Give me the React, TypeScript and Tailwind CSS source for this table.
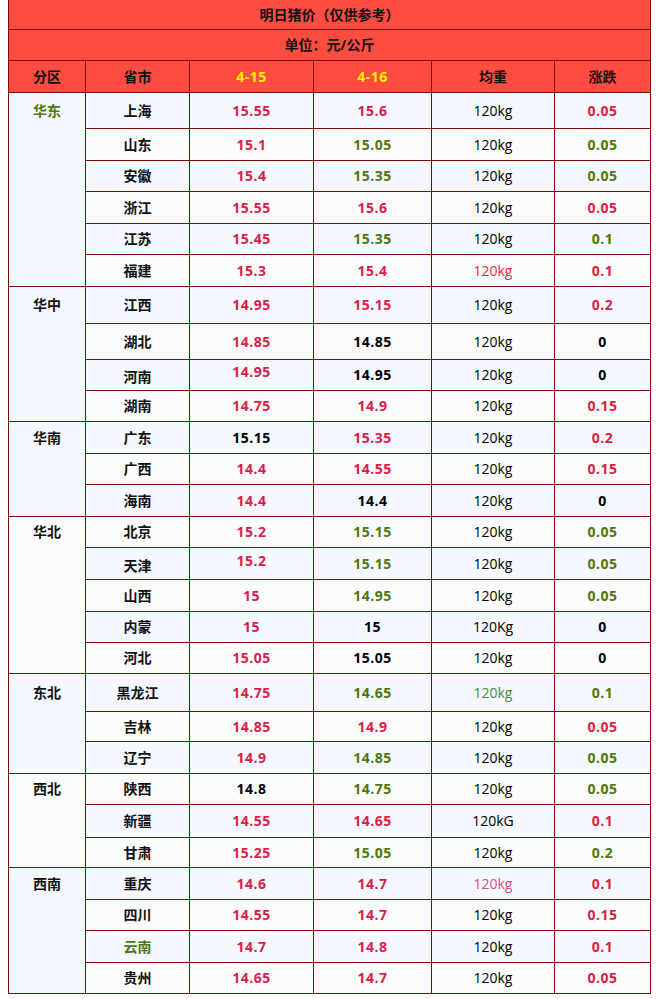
import React from "react";

type C = "r" | "g" | "k" | "rw" | "pw" | "gw";

const colorCls: Record<C, string> = {
  r: "text-[#dc1e46]",
  g: "text-[#4c780c]",
  k: "text-[#000000]",
  rw: "text-[#f4283c]",
  pw: "text-[#dc4f7e]",
  gw: "text-[#4a8a3a]",
};

type Row = {
  name: string;
  nameColor?: string;
  nameOff?: string;
  h: string;
  bg: "b" | "w";
  a: string;
  ac: C;
  aOff?: string;
  b: string;
  bc: C;
  w: string;
  wc: C;
  d: string;
  dc: C;
};

type Group = { name: string; nameColor?: string; span: string; rows: Row[] };

const groups: Group[] = [
  {
    name: "华东",
    nameColor: "text-[#4c780c]",
    span: "row-span-6",
    rows: [
      { name: "上海", h: "h-[35px]", bg: "b", a: "15.55", ac: "r", b: "15.6", bc: "r", w: "120kg", wc: "k", d: "0.05", dc: "r" },
      { name: "山东", h: "h-[31px]", bg: "w", a: "15.1", ac: "r", b: "15.05", bc: "g", w: "120kg", wc: "k", d: "0.05", dc: "g" },
      { name: "安徽", h: "h-[30px]", bg: "b", a: "15.4", ac: "r", b: "15.35", bc: "g", w: "120kg", wc: "k", d: "0.05", dc: "g" },
      { name: "浙江", h: "h-[31px]", bg: "w", a: "15.55", ac: "r", b: "15.6", bc: "r", w: "120kg", wc: "k", d: "0.05", dc: "r" },
      { name: "江苏", h: "h-[30px]", bg: "b", a: "15.45", ac: "r", b: "15.35", bc: "g", w: "120kg", wc: "k", d: "0.1", dc: "g" },
      { name: "福建", h: "h-[31px]", bg: "w", a: "15.3", ac: "r", b: "15.4", bc: "r", w: "120kg", wc: "rw", d: "0.1", dc: "r" },
    ],
  },
  {
    name: "华中",
    span: "row-span-4",
    rows: [
      { name: "江西", h: "h-[36px]", bg: "b", a: "14.95", ac: "r", b: "15.15", bc: "r", w: "120kg", wc: "k", d: "0.2", dc: "r" },
      { name: "湖北", h: "h-[35px]", bg: "w", a: "14.85", ac: "r", b: "14.85", bc: "k", w: "120kg", wc: "k", d: "0", dc: "k" },
      { name: "河南", nameOff: "relative top-[2px]", h: "h-[30px]", bg: "b", a: "14.95", ac: "r", aOff: "relative -top-[3px]", b: "14.95", bc: "k", w: "120kg", wc: "k", d: "0", dc: "k" },
      { name: "湖南", h: "h-[30px]", bg: "w", a: "14.75", ac: "r", b: "14.9", bc: "r", w: "120kg", wc: "k", d: "0.15", dc: "r" },
    ],
  },
  {
    name: "华南",
    span: "row-span-3",
    rows: [
      { name: "广东", h: "h-[31px]", bg: "b", a: "15.15", ac: "k", b: "15.35", bc: "r", w: "120kg", wc: "k", d: "0.2", dc: "r" },
      { name: "广西", h: "h-[30px]", bg: "w", a: "14.4", ac: "r", b: "14.55", bc: "r", w: "120kg", wc: "k", d: "0.15", dc: "r" },
      { name: "海南", h: "h-[31px]", bg: "b", a: "14.4", ac: "r", b: "14.4", bc: "k", w: "120kg", wc: "k", d: "0", dc: "k" },
    ],
  },
  {
    name: "华北",
    span: "row-span-5",
    rows: [
      { name: "北京", h: "h-[30px]", bg: "w", a: "15.2", ac: "r", b: "15.15", bc: "g", w: "120kg", wc: "k", d: "0.05", dc: "g" },
      { name: "天津", nameOff: "relative top-[2px]", h: "h-[31px]", bg: "b", a: "15.2", ac: "r", aOff: "relative -top-[3px]", b: "15.15", bc: "g", w: "120kg", wc: "k", d: "0.05", dc: "g" },
      { name: "山西", h: "h-[31px]", bg: "w", a: "15", ac: "r", b: "14.95", bc: "g", w: "120kg", wc: "k", d: "0.05", dc: "g" },
      { name: "内蒙", h: "h-[30px]", bg: "b", a: "15", ac: "r", b: "15", bc: "k", w: "120Kg", wc: "k", d: "0", dc: "k" },
      { name: "河北", h: "h-[30px]", bg: "w", a: "15.05", ac: "r", b: "15.05", bc: "k", w: "120kg", wc: "k", d: "0", dc: "k" },
    ],
  },
  {
    name: "东北",
    span: "row-span-3",
    rows: [
      { name: "黑龙江", h: "h-[37px]", bg: "b", a: "14.75", ac: "r", b: "14.65", bc: "g", w: "120kg", wc: "gw", d: "0.1", dc: "g" },
      { name: "吉林", h: "h-[29px]", bg: "w", a: "14.85", ac: "r", b: "14.9", bc: "r", w: "120kg", wc: "k", d: "0.05", dc: "r" },
      { name: "辽宁", h: "h-[31px]", bg: "b", a: "14.9", ac: "r", b: "14.85", bc: "g", w: "120kg", wc: "k", d: "0.05", dc: "g" },
    ],
  },
  {
    name: "西北",
    span: "row-span-3",
    rows: [
      { name: "陕西", h: "h-[30px]", bg: "w", a: "14.8", ac: "k", b: "14.75", bc: "g", w: "120kg", wc: "k", d: "0.05", dc: "g" },
      { name: "新疆", h: "h-[32px]", bg: "b", a: "14.55", ac: "r", b: "14.65", bc: "r", w: "120kG", wc: "k", d: "0.1", dc: "r" },
      { name: "甘肃", h: "h-[29px]", bg: "w", a: "15.25", ac: "r", b: "15.05", bc: "g", w: "120kg", wc: "k", d: "0.2", dc: "g" },
    ],
  },
  {
    name: "西南",
    span: "row-span-4",
    rows: [
      { name: "重庆", h: "h-[31px]", bg: "b", a: "14.6", ac: "r", b: "14.7", bc: "r", w: "120kg", wc: "pw", d: "0.1", dc: "r" },
      { name: "四川", h: "h-[30px]", bg: "w", a: "14.55", ac: "r", b: "14.7", bc: "r", w: "120kg", wc: "k", d: "0.15", dc: "r" },
      { name: "云南", nameColor: "text-[#4c780c]", h: "h-[31px]", bg: "b", a: "14.7", ac: "r", b: "14.8", bc: "r", w: "120kg", wc: "k", d: "0.1", dc: "r" },
      { name: "贵州", h: "h-[30px]", bg: "w", a: "14.65", ac: "r", b: "14.7", bc: "r", w: "120kg", wc: "k", d: "0.05", dc: "r" },
    ],
  },
];

const bgCls = { b: "bg-[#f5f8fe]", w: "bg-[#fcfcfc]" };

export default function App() {
  return (
    <div className="w-[661px] h-[999px] bg-white font-['Open_Sans','Noto_Sans_CJK_SC',sans-serif] text-[14px] leading-[20px]">
      <div className="ml-[8px] w-[643px] bg-[#7e0a06] px-px pb-px grid grid-cols-[76px_103px_123px_117px_122px_95px] gap-px">
        <div className="col-span-6 h-[29px] bg-[#fe4c40] flex items-center justify-center font-bold text-[#111]">
          明日猪价（仅供参考）
        </div>
        <div className="col-span-6 h-[30px] bg-[#fe4c40] flex items-center justify-center font-bold text-[#111]">
          单位：元/公斤
        </div>
        {["分区", "省市", "4-15", "4-16", "均重", "涨跌"].map((t, i) => (
          <div
            key={t}
            className={`h-[31px] bg-[#fe4c40] flex items-center justify-center font-bold ${
              i === 2 || i === 3 ? "text-[#ffef00] tracking-[0.5px]" : "text-[#111]"
            }`}
          >
            {t}
          </div>
        ))}
        {groups.map((g) => (
          <React.Fragment key={g.name}>
            <div className={`${g.span} col-start-1 ${bgCls[g.rows[0].bg]}`}>
              <div className={`${g.rows[0].h} flex items-center justify-center font-bold ${g.nameColor ?? "text-[#111]"}`}>
                {g.name}
              </div>
            </div>
            {g.rows.map((r) => (
              <React.Fragment key={r.name}>
                <div className={`${r.h} ${bgCls[r.bg]} flex items-center justify-center font-bold ${r.nameColor ?? "text-[#111]"}`}>
                  <span className={r.nameOff ?? ""}>{r.name}</span>
                </div>
                <div className={`${r.h} ${bgCls[r.bg]} flex items-center justify-center font-bold tracking-[0.5px] ${colorCls[r.ac]}`}>
                  <span className={r.aOff ?? ""}>{r.a}</span>
                </div>
                <div className={`${r.h} ${bgCls[r.bg]} flex items-center justify-center font-bold tracking-[0.5px] ${colorCls[r.bc]}`}>
                  {r.b}
                </div>
                <div className={`${r.h} ${bgCls[r.bg]} flex items-center justify-center ${colorCls[r.wc]}`}>
                  {r.w}
                </div>
                <div className={`${r.h} ${bgCls[r.bg]} flex items-center justify-center font-bold tracking-[0.5px] ${colorCls[r.dc]}`}>
                  {r.d}
                </div>
              </React.Fragment>
            ))}
          </React.Fragment>
        ))}
      </div>
    </div>
  );
}
